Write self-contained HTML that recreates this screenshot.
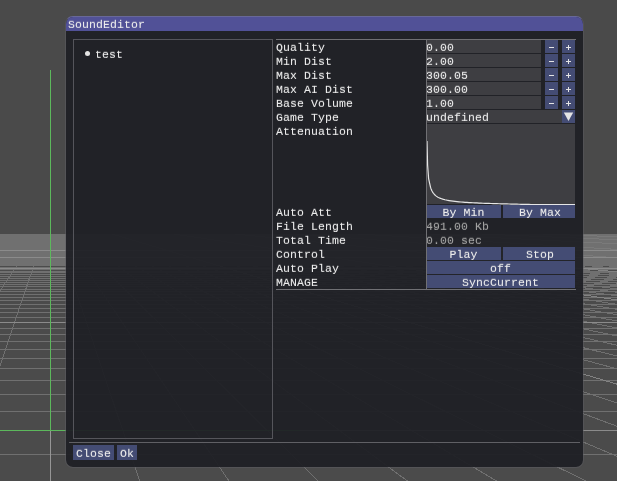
<!DOCTYPE html>
<html><head><meta charset="utf-8"><title>SoundEditor</title>
<style>
html,body{margin:0;padding:0}
body{width:617px;height:481px;overflow:hidden;position:relative;background:#4a4a4a;font-family:"Liberation Mono",monospace;font-size:11.5px;letter-spacing:0.1px;color:#ececec;text-shadow:0 -1px 0 rgba(228,228,228,0.25);line-height:13px}
#win{will-change:transform;position:absolute;box-sizing:border-box;left:65px;top:16px;width:519px;height:452px;border-radius:8px;background:rgba(31,32,37,0.945);background-clip:padding-box;border-style:solid;border-width:1px;border-color:rgb(104,104,152) rgba(94,94,100,0.45) rgba(94,94,100,0.5) rgba(94,94,100,0.5);overflow:hidden}
#title{position:absolute;left:0;top:0;width:517px;height:14px;background:rgba(83,83,155,0.97)}
.t{position:absolute;white-space:pre;height:13px;line-height:13px}
.a{position:absolute}
.fr{position:absolute;background:#3e3e42;height:13px}
.bt{position:absolute;background:#444c74;height:13px;text-align:center}
.onf{-webkit-text-stroke-color:#3e3e42}
.ont{-webkit-text-stroke-color:#525296}
.ln{position:absolute;background:#707074}
.g{color:#a2a2a2;text-shadow:0 -1px 0 rgba(160,160,160,0.3)}
</style></head>
<body>
<svg width="617" height="481" viewBox="0 0 617 481" shape-rendering="crispEdges" style="position:absolute;left:0;top:0">
<rect x="0" y="0" width="617" height="234" fill="#4a4a4a"/>
<rect x="0" y="234" width="617" height="247" fill="#4b4b4b"/>
<rect x="0" y="234" width="617" height="32" fill="#707070"/>
<g><line x1="-51.00" y1="266" x2="-484.82" y2="481" stroke="#707070" stroke-width="1"/><line x1="-34.08" y1="266" x2="-395.60" y2="481" stroke="#707070" stroke-width="1"/><line x1="-17.16" y1="266" x2="-306.38" y2="481" stroke="#707070" stroke-width="1"/><line x1="-0.25" y1="266" x2="-217.16" y2="481" stroke="#707070" stroke-width="1"/><line x1="16.67" y1="266" x2="-127.94" y2="481" stroke="#707070" stroke-width="1"/><line x1="33.58" y1="266" x2="-38.72" y2="481" stroke="#707070" stroke-width="1"/><line x1="67.42" y1="266" x2="139.72" y2="481" stroke="#707070" stroke-width="1"/><line x1="84.33" y1="266" x2="228.94" y2="481" stroke="#707070" stroke-width="1"/><line x1="101.25" y1="266" x2="318.16" y2="481" stroke="#707070" stroke-width="1"/><line x1="118.16" y1="266" x2="407.38" y2="481" stroke="#707070" stroke-width="1"/><line x1="135.08" y1="266" x2="496.60" y2="481" stroke="#707070" stroke-width="1"/><line x1="152.00" y1="266" x2="585.82" y2="481" stroke="#707070" stroke-width="1"/><line x1="168.91" y1="266" x2="675.04" y2="481" stroke="#707070" stroke-width="1"/><line x1="185.83" y1="266" x2="764.26" y2="481" stroke="#707070" stroke-width="1"/><line x1="202.74" y1="266" x2="853.48" y2="481" stroke="#707070" stroke-width="1"/><line x1="236.57" y1="266" x2="1031.92" y2="481" stroke="#707070" stroke-width="1"/><line x1="253.49" y1="266" x2="1121.14" y2="481" stroke="#707070" stroke-width="1"/><line x1="270.41" y1="266" x2="1210.37" y2="481" stroke="#707070" stroke-width="1"/><line x1="287.32" y1="266" x2="1299.59" y2="481" stroke="#707070" stroke-width="1"/><line x1="304.24" y1="266" x2="1388.81" y2="481" stroke="#707070" stroke-width="1"/><line x1="321.15" y1="266" x2="1478.03" y2="481" stroke="#707070" stroke-width="1"/><line x1="338.07" y1="266" x2="1567.25" y2="481" stroke="#707070" stroke-width="1"/><line x1="354.99" y1="266" x2="1656.47" y2="481" stroke="#707070" stroke-width="1"/><line x1="371.90" y1="266" x2="1745.69" y2="481" stroke="#707070" stroke-width="1"/><line x1="405.73" y1="266" x2="1924.13" y2="481" stroke="#707070" stroke-width="1"/><line x1="422.65" y1="266" x2="2013.35" y2="481" stroke="#707070" stroke-width="1"/><line x1="439.57" y1="266" x2="2102.57" y2="481" stroke="#707070" stroke-width="1"/><line x1="456.48" y1="266" x2="2191.79" y2="481" stroke="#707070" stroke-width="1"/><line x1="473.40" y1="266" x2="2281.01" y2="481" stroke="#707070" stroke-width="1"/><line x1="490.31" y1="266" x2="2370.23" y2="481" stroke="#707070" stroke-width="1"/><line x1="507.23" y1="266" x2="2459.45" y2="481" stroke="#707070" stroke-width="1"/><line x1="524.14" y1="266" x2="2548.67" y2="481" stroke="#707070" stroke-width="1"/><line x1="541.06" y1="266" x2="2637.89" y2="481" stroke="#707070" stroke-width="1"/><line x1="574.89" y1="266" x2="2816.33" y2="481" stroke="#707070" stroke-width="1"/><line x1="591.81" y1="266" x2="2905.55" y2="481" stroke="#707070" stroke-width="1"/><line x1="608.72" y1="266" x2="2994.77" y2="481" stroke="#707070" stroke-width="1"/><line x1="625.64" y1="266" x2="3083.99" y2="481" stroke="#707070" stroke-width="1"/><line x1="642.56" y1="266" x2="3173.21" y2="481" stroke="#707070" stroke-width="1"/><line x1="659.47" y1="266" x2="3262.43" y2="481" stroke="#707070" stroke-width="1"/><line x1="676.39" y1="266" x2="3351.65" y2="481" stroke="#707070" stroke-width="1"/><line x1="693.30" y1="266" x2="3440.87" y2="481" stroke="#707070" stroke-width="1"/><line x1="710.22" y1="266" x2="3530.10" y2="481" stroke="#707070" stroke-width="1"/><line x1="744.05" y1="266" x2="3708.54" y2="481" stroke="#707070" stroke-width="1"/><line x1="760.97" y1="266" x2="3797.76" y2="481" stroke="#707070" stroke-width="1"/><line x1="777.88" y1="266" x2="3886.98" y2="481" stroke="#707070" stroke-width="1"/><line x1="794.80" y1="266" x2="3976.20" y2="481" stroke="#707070" stroke-width="1"/><line x1="811.72" y1="266" x2="4065.42" y2="481" stroke="#707070" stroke-width="1"/><line x1="828.63" y1="266" x2="4154.64" y2="481" stroke="#707070" stroke-width="1"/><line x1="845.55" y1="266" x2="4243.86" y2="481" stroke="#707070" stroke-width="1"/><line x1="862.46" y1="266" x2="4333.08" y2="481" stroke="#707070" stroke-width="1"/><line x1="879.38" y1="266" x2="4422.30" y2="481" stroke="#707070" stroke-width="1"/><line x1="913.21" y1="266" x2="4600.74" y2="481" stroke="#707070" stroke-width="1"/><line x1="930.13" y1="266" x2="4689.96" y2="481" stroke="#707070" stroke-width="1"/><line x1="947.04" y1="266" x2="4779.18" y2="481" stroke="#707070" stroke-width="1"/><line x1="963.96" y1="266" x2="4868.40" y2="481" stroke="#707070" stroke-width="1"/><line x1="980.87" y1="266" x2="4957.62" y2="481" stroke="#707070" stroke-width="1"/><line x1="997.79" y1="266" x2="5046.84" y2="481" stroke="#707070" stroke-width="1"/><line x1="1014.71" y1="266" x2="5136.06" y2="481" stroke="#707070" stroke-width="1"/><line x1="1031.62" y1="266" x2="5225.28" y2="481" stroke="#707070" stroke-width="1"/><line x1="1048.54" y1="266" x2="5314.50" y2="481" stroke="#707070" stroke-width="1"/><line x1="1082.37" y1="266" x2="5492.94" y2="481" stroke="#707070" stroke-width="1"/><line x1="1099.29" y1="266" x2="5582.16" y2="481" stroke="#707070" stroke-width="1"/><line x1="1116.20" y1="266" x2="5671.38" y2="481" stroke="#707070" stroke-width="1"/><line x1="1133.12" y1="266" x2="5760.60" y2="481" stroke="#707070" stroke-width="1"/><line x1="1150.03" y1="266" x2="5849.83" y2="481" stroke="#707070" stroke-width="1"/><line x1="1166.95" y1="266" x2="5939.05" y2="481" stroke="#707070" stroke-width="1"/><line x1="1183.86" y1="266" x2="6028.27" y2="481" stroke="#707070" stroke-width="1"/><line x1="1200.78" y1="266" x2="6117.49" y2="481" stroke="#707070" stroke-width="1"/><line x1="1217.70" y1="266" x2="6206.71" y2="481" stroke="#707070" stroke-width="1"/><line x1="1251.53" y1="266" x2="6385.15" y2="481" stroke="#707070" stroke-width="1"/><line x1="1268.44" y1="266" x2="6474.37" y2="481" stroke="#707070" stroke-width="1"/><line x1="1285.36" y1="266" x2="6563.59" y2="481" stroke="#707070" stroke-width="1"/><line x1="1302.28" y1="266" x2="6652.81" y2="481" stroke="#707070" stroke-width="1"/><line x1="1319.19" y1="266" x2="6742.03" y2="481" stroke="#707070" stroke-width="1"/><line x1="1336.11" y1="266" x2="6831.25" y2="481" stroke="#707070" stroke-width="1"/><line x1="1353.02" y1="266" x2="6920.47" y2="481" stroke="#707070" stroke-width="1"/><line x1="1369.94" y1="266" x2="7009.69" y2="481" stroke="#707070" stroke-width="1"/><line x1="1386.86" y1="266" x2="7098.91" y2="481" stroke="#707070" stroke-width="1"/><line x1="1420.69" y1="266" x2="7277.35" y2="481" stroke="#707070" stroke-width="1"/><line x1="1437.60" y1="266" x2="7366.57" y2="481" stroke="#707070" stroke-width="1"/><line x1="1454.52" y1="266" x2="7455.79" y2="481" stroke="#707070" stroke-width="1"/><line x1="1471.43" y1="266" x2="7545.01" y2="481" stroke="#707070" stroke-width="1"/><line x1="1488.35" y1="266" x2="7634.23" y2="481" stroke="#707070" stroke-width="1"/><line x1="1505.27" y1="266" x2="7723.45" y2="481" stroke="#707070" stroke-width="1"/><line x1="1522.18" y1="266" x2="7812.67" y2="481" stroke="#707070" stroke-width="1"/><line x1="1539.10" y1="266" x2="7901.89" y2="481" stroke="#707070" stroke-width="1"/><line x1="1556.01" y1="266" x2="7991.11" y2="481" stroke="#707070" stroke-width="1"/><line x1="1589.85" y1="266" x2="8169.56" y2="481" stroke="#707070" stroke-width="1"/><line x1="1606.76" y1="266" x2="8258.78" y2="481" stroke="#707070" stroke-width="1"/><line x1="1623.68" y1="266" x2="8348.00" y2="481" stroke="#707070" stroke-width="1"/><line x1="1640.59" y1="266" x2="8437.22" y2="481" stroke="#707070" stroke-width="1"/><line x1="1657.51" y1="266" x2="8526.44" y2="481" stroke="#707070" stroke-width="1"/><line x1="1674.43" y1="266" x2="8615.66" y2="481" stroke="#707070" stroke-width="1"/><line x1="1691.34" y1="266" x2="8704.88" y2="481" stroke="#707070" stroke-width="1"/><line x1="1708.26" y1="266" x2="8794.10" y2="481" stroke="#707070" stroke-width="1"/><line x1="1725.17" y1="266" x2="8883.32" y2="481" stroke="#707070" stroke-width="1"/><line x1="1759.00" y1="266" x2="9061.76" y2="481" stroke="#707070" stroke-width="1"/><line x1="1775.92" y1="266" x2="9150.98" y2="481" stroke="#707070" stroke-width="1"/><line x1="1792.84" y1="266" x2="9240.20" y2="481" stroke="#707070" stroke-width="1"/><line x1="1809.75" y1="266" x2="9329.42" y2="481" stroke="#707070" stroke-width="1"/><line x1="1826.67" y1="266" x2="9418.64" y2="481" stroke="#707070" stroke-width="1"/><line x1="1843.58" y1="266" x2="9507.86" y2="481" stroke="#707070" stroke-width="1"/><line x1="1860.50" y1="266" x2="9597.08" y2="481" stroke="#707070" stroke-width="1"/><line x1="1877.42" y1="266" x2="9686.30" y2="481" stroke="#707070" stroke-width="1"/><line x1="1894.33" y1="266" x2="9775.52" y2="481" stroke="#707070" stroke-width="1"/><line x1="1928.16" y1="266" x2="9953.96" y2="481" stroke="#707070" stroke-width="1"/><line x1="1945.08" y1="266" x2="10043.18" y2="481" stroke="#707070" stroke-width="1"/><line x1="1962.00" y1="266" x2="10132.40" y2="481" stroke="#707070" stroke-width="1"/><line x1="1978.91" y1="266" x2="10221.62" y2="481" stroke="#707070" stroke-width="1"/><line x1="1995.83" y1="266" x2="10310.84" y2="481" stroke="#707070" stroke-width="1"/><line x1="2012.74" y1="266" x2="10400.07" y2="481" stroke="#707070" stroke-width="1"/><line x1="2029.66" y1="266" x2="10489.29" y2="481" stroke="#707070" stroke-width="1"/><line x1="2046.58" y1="266" x2="10578.51" y2="481" stroke="#707070" stroke-width="1"/><line x1="2063.49" y1="266" x2="10667.73" y2="481" stroke="#707070" stroke-width="1"/><line x1="2097.32" y1="266" x2="10846.17" y2="481" stroke="#707070" stroke-width="1"/><line x1="2114.24" y1="266" x2="10935.39" y2="481" stroke="#707070" stroke-width="1"/><line x1="2131.15" y1="266" x2="11024.61" y2="481" stroke="#707070" stroke-width="1"/><line x1="2148.07" y1="266" x2="11113.83" y2="481" stroke="#707070" stroke-width="1"/><line x1="2164.99" y1="266" x2="11203.05" y2="481" stroke="#707070" stroke-width="1"/><line x1="2181.90" y1="266" x2="11292.27" y2="481" stroke="#707070" stroke-width="1"/><line x1="2198.82" y1="266" x2="11381.49" y2="481" stroke="#707070" stroke-width="1"/><line x1="2215.73" y1="266" x2="11470.71" y2="481" stroke="#707070" stroke-width="1"/><line x1="2232.65" y1="266" x2="11559.93" y2="481" stroke="#707070" stroke-width="1"/></g>
<g fill="#707070"><rect x="0" y="267" width="617" height="1"/><rect x="0" y="269" width="617" height="1"/><rect x="0" y="271" width="617" height="1"/><rect x="0" y="272" width="617" height="1"/><rect x="0" y="274" width="617" height="1"/><rect x="0" y="276" width="617" height="1"/><rect x="0" y="278" width="617" height="1"/><rect x="0" y="280" width="617" height="1"/><rect x="0" y="282" width="617" height="1"/><rect x="0" y="284" width="617" height="1"/><rect x="0" y="286" width="617" height="1"/><rect x="0" y="289" width="617" height="1"/><rect x="0" y="291" width="617" height="1"/><rect x="0" y="294" width="617" height="1"/><rect x="0" y="297" width="617" height="1"/><rect x="0" y="300" width="617" height="1"/><rect x="0" y="304" width="617" height="1"/><rect x="0" y="308" width="617" height="1"/><rect x="0" y="312" width="617" height="1"/><rect x="0" y="317" width="617" height="1"/><rect x="0" y="328" width="617" height="1"/><rect x="0" y="334" width="617" height="1"/><rect x="0" y="341" width="617" height="1"/><rect x="0" y="349" width="617" height="1"/><rect x="0" y="358" width="617" height="1"/><rect x="0" y="368" width="617" height="1"/><rect x="0" y="380" width="617" height="1"/><rect x="0" y="394" width="617" height="1"/><rect x="0" y="411" width="617" height="1"/><rect x="0" y="454" width="617" height="1"/></g>
<g><line x1="219.66" y1="266" x2="942.70" y2="481" stroke="#838383" stroke-width="1"/><line x1="112.04" y1="234" x2="219.66" y2="266" stroke="#8b8b8b" stroke-opacity="0.35" stroke-width="1"/><line x1="388.82" y1="266" x2="1834.91" y2="481" stroke="#838383" stroke-width="1"/><line x1="173.59" y1="234" x2="388.82" y2="266" stroke="#8b8b8b" stroke-opacity="0.35" stroke-width="1"/><line x1="557.98" y1="266" x2="2727.11" y2="481" stroke="#838383" stroke-width="1"/><line x1="235.13" y1="234" x2="557.98" y2="266" stroke="#8b8b8b" stroke-opacity="0.35" stroke-width="1"/><line x1="727.14" y1="266" x2="3619.32" y2="481" stroke="#838383" stroke-width="1"/><line x1="296.67" y1="234" x2="727.14" y2="266" stroke="#8b8b8b" stroke-opacity="0.35" stroke-width="1"/><line x1="896.29" y1="266" x2="4511.52" y2="481" stroke="#838383" stroke-width="1"/><line x1="358.21" y1="234" x2="896.29" y2="266" stroke="#8b8b8b" stroke-opacity="0.35" stroke-width="1"/><line x1="1065.45" y1="266" x2="5403.72" y2="481" stroke="#838383" stroke-width="1"/><line x1="419.76" y1="234" x2="1065.45" y2="266" stroke="#8b8b8b" stroke-opacity="0.35" stroke-width="1"/><line x1="1234.61" y1="266" x2="6295.93" y2="481" stroke="#838383" stroke-width="1"/><line x1="481.30" y1="234" x2="1234.61" y2="266" stroke="#8b8b8b" stroke-opacity="0.35" stroke-width="1"/><line x1="1403.77" y1="266" x2="7188.13" y2="481" stroke="#838383" stroke-width="1"/><line x1="542.84" y1="234" x2="1403.77" y2="266" stroke="#8b8b8b" stroke-opacity="0.35" stroke-width="1"/><line x1="1572.93" y1="266" x2="8080.34" y2="481" stroke="#838383" stroke-width="1"/><line x1="1742.09" y1="266" x2="8972.54" y2="481" stroke="#838383" stroke-width="1"/><line x1="1911.25" y1="266" x2="9864.74" y2="481" stroke="#838383" stroke-width="1"/><line x1="2080.41" y1="266" x2="10756.95" y2="481" stroke="#838383" stroke-width="1"/></g>
<g fill="#8b8b8b"><rect x="0" y="250" width="617" height="1"/><rect x="0" y="257" width="617" height="1"/><rect x="0" y="268" width="617" height="1"/><rect x="0" y="322" width="617" height="1"/><rect x="0" y="430" width="617" height="1"/></g>
<rect x="50" y="234" width="1" height="247" fill="#969696"/>
<rect x="50" y="70" width="1" height="361" fill="#5cb85c"/>
<rect x="0" y="430" width="300" height="1" fill="#5cb85c"/>
</svg>
<div id="win">
<div id="title"></div>
<div class="t ont" style="left:2.0px;top:1.0px">SoundEditor</div>
<div class="a" style="left:7px;top:22px;width:198px;height:398px;border:1px solid #55555b"></div>
<div class="a" style="left:19px;top:34.25px;width:5px;height:5px;border-radius:50%;background:#e4e4e4"></div>
<div class="t " style="left:29.0px;top:31.0px">test</div>
<div class="ln" style="left:210px;top:22px;width:300px;height:1px;"></div>
<div class="ln" style="left:210px;top:272px;width:300px;height:1px;"></div>
<div class="t " style="left:210.0px;top:24.0px">Quality</div>
<div class="t " style="left:210.0px;top:38.0px">Min Dist</div>
<div class="t " style="left:210.0px;top:52.0px">Max Dist</div>
<div class="t " style="left:210.0px;top:66.0px">Max AI Dist</div>
<div class="t " style="left:210.0px;top:80.0px">Base Volume</div>
<div class="t " style="left:210.0px;top:94.0px">Game Type</div>
<div class="t " style="left:210.0px;top:108.0px">Attenuation</div>
<div class="t " style="left:210.0px;top:189.0px">Auto Att</div>
<div class="t " style="left:210.0px;top:203.0px">File Length</div>
<div class="t " style="left:210.0px;top:217.0px">Total Time</div>
<div class="t " style="left:210.0px;top:231.0px">Control</div>
<div class="t " style="left:210.0px;top:245.0px">Auto Play</div>
<div class="t " style="left:210.0px;top:259.0px">MANAGE</div>
<div class="fr" style="left:360px;top:23px;width:115px;height:13px;"></div>
<div class="t onf" style="left:360.0px;top:24.0px">0.00</div>
<div class="bt" style="left:479px;top:23px;width:13px;height:13px"><svg width="13" height="13" style="position:absolute;left:0;top:0"><rect x="4" y="7" width="5" height="1" fill="#e4e4e4"/></svg></div>
<div class="bt" style="left:496px;top:23px;width:13px;height:13px"><svg width="13" height="13" style="position:absolute;left:0;top:0"><rect x="4" y="7" width="5" height="1" fill="#e4e4e4"/><rect x="6" y="5" width="1" height="5" fill="#e4e4e4"/></svg></div>
<div class="fr" style="left:360px;top:37px;width:115px;height:13px;"></div>
<div class="t onf" style="left:360.0px;top:38.0px">2.00</div>
<div class="bt" style="left:479px;top:37px;width:13px;height:13px"><svg width="13" height="13" style="position:absolute;left:0;top:0"><rect x="4" y="7" width="5" height="1" fill="#e4e4e4"/></svg></div>
<div class="bt" style="left:496px;top:37px;width:13px;height:13px"><svg width="13" height="13" style="position:absolute;left:0;top:0"><rect x="4" y="7" width="5" height="1" fill="#e4e4e4"/><rect x="6" y="5" width="1" height="5" fill="#e4e4e4"/></svg></div>
<div class="fr" style="left:360px;top:51px;width:115px;height:13px;"></div>
<div class="t onf" style="left:360.0px;top:52.0px">300.05</div>
<div class="bt" style="left:479px;top:51px;width:13px;height:13px"><svg width="13" height="13" style="position:absolute;left:0;top:0"><rect x="4" y="7" width="5" height="1" fill="#e4e4e4"/></svg></div>
<div class="bt" style="left:496px;top:51px;width:13px;height:13px"><svg width="13" height="13" style="position:absolute;left:0;top:0"><rect x="4" y="7" width="5" height="1" fill="#e4e4e4"/><rect x="6" y="5" width="1" height="5" fill="#e4e4e4"/></svg></div>
<div class="fr" style="left:360px;top:65px;width:115px;height:13px;"></div>
<div class="t onf" style="left:360.0px;top:66.0px">300.00</div>
<div class="bt" style="left:479px;top:65px;width:13px;height:13px"><svg width="13" height="13" style="position:absolute;left:0;top:0"><rect x="4" y="7" width="5" height="1" fill="#e4e4e4"/></svg></div>
<div class="bt" style="left:496px;top:65px;width:13px;height:13px"><svg width="13" height="13" style="position:absolute;left:0;top:0"><rect x="4" y="7" width="5" height="1" fill="#e4e4e4"/><rect x="6" y="5" width="1" height="5" fill="#e4e4e4"/></svg></div>
<div class="fr" style="left:360px;top:79px;width:115px;height:13px;"></div>
<div class="t onf" style="left:360.0px;top:80.0px">1.00</div>
<div class="bt" style="left:479px;top:79px;width:13px;height:13px"><svg width="13" height="13" style="position:absolute;left:0;top:0"><rect x="4" y="7" width="5" height="1" fill="#e4e4e4"/></svg></div>
<div class="bt" style="left:496px;top:79px;width:13px;height:13px"><svg width="13" height="13" style="position:absolute;left:0;top:0"><rect x="4" y="7" width="5" height="1" fill="#e4e4e4"/><rect x="6" y="5" width="1" height="5" fill="#e4e4e4"/></svg></div>
<div class="fr" style="left:360px;top:93px;width:136px;height:13px;"></div>
<div class="t onf" style="left:360.0px;top:94.0px">undefined</div>
<div class="bt" style="left:496px;top:93px;width:13px;height:13px"><svg width="13" height="13" style="position:absolute;left:0;top:0"><polygon points="1.8,2.4 11.2,2.4 6.5,10.9" fill="#e4e4e4"/></svg></div>
<div class="fr" style="left:360px;top:107px;width:149px;height:80px"><svg width="149" height="82" style="position:absolute;left:0;top:0;overflow:visible"><polyline fill="none" stroke="#e6e6e6" stroke-width="1.2" stroke-linejoin="round" points="1.0,17.00 1.6,41.00 2.6,54.60 4.5,63.23 5.0,64.67 5.5,65.88 6.0,66.93 6.5,67.83 7.0,68.62 7.5,69.32 8.0,69.94 8.5,70.50 9.0,71.00 9.5,71.45 10.0,71.86 10.5,72.24 11.0,72.58 11.5,72.90 12.0,73.19 12.5,73.46 13.0,73.71 13.5,73.95 14.0,74.17 14.5,74.37 15.0,74.56 15.5,74.74 16.0,74.91 16.5,75.07 17.0,75.22 17.5,75.36 18.0,75.50 18.5,75.63 19.0,75.75 21.0,76.18 23.0,76.54 25.0,76.86 27.0,77.14 29.0,77.39 31.0,77.61 33.0,77.80 35.0,77.98 37.0,78.14 39.0,78.29 41.0,78.43 43.0,78.55 45.0,78.67 47.0,78.77 49.0,78.88 51.0,78.97 53.0,79.06 55.0,79.14 57.0,79.23 59.0,79.30 61.0,79.37 63.0,79.44 65.0,79.51 67.0,79.58 69.0,79.64 71.0,79.70 73.0,79.76 75.0,79.81 77.0,79.87 79.0,79.92 81.0,79.97 83.0,80.02 85.0,80.07 87.0,80.11 89.0,80.16 91.0,80.20 93.0,80.25 95.0,80.29 97.0,80.33 99.0,80.38 101.0,80.42 103.0,80.46 105.0,80.49 107.0,80.50 109.0,80.50 111.0,80.50 113.0,80.50 115.0,80.50 117.0,80.50 119.0,80.50 121.0,80.50 123.0,80.50 125.0,80.50 127.0,80.50 129.0,80.50 131.0,80.50 133.0,80.50 135.0,80.50 137.0,80.50 139.0,80.50 141.0,80.50 143.0,80.50 145.0,80.50 147.0,80.50 149.0,80.50"/></svg></div>
<div class="bt" style="left:360px;top:188px;width:75px;height:13px;line-height:13px"><span style="position:relative;top:1.0px;left:0px">By Min</span></div>
<div class="bt" style="left:437px;top:188px;width:72px;height:13px;line-height:13px"><span style="position:relative;top:1.0px;left:1px">By Max</span></div>
<div class="t g" style="left:360.0px;top:203.0px">491.00 Kb</div>
<div class="t g" style="left:360.0px;top:217.0px">0.00 sec</div>
<div class="bt" style="left:360px;top:230px;width:75px;height:13px;line-height:13px"><span style="position:relative;top:1.0px;left:0px">Play</span></div>
<div class="bt" style="left:437px;top:230px;width:72px;height:13px;line-height:13px"><span style="position:relative;top:1.0px;left:1px">Stop</span></div>
<div class="bt" style="left:360px;top:244px;width:149px;height:13px;line-height:13px"><span style="position:relative;top:1.0px;left:0px">off</span></div>
<div class="bt" style="left:360px;top:258px;width:149px;height:13px;line-height:13px"><span style="position:relative;top:1.0px;left:0px">SyncCurrent</span></div>
<div class="ln" style="left:360px;top:22px;width:1px;height:251px;"></div>
<div class="ln" style="left:3px;top:425px;width:511px;height:1px;background:#606065"></div>
<div class="bt" style="left:7px;top:428px;width:41px;height:15px;line-height:15px"><span style="position:relative;top:1.0px;left:0px">Close</span></div>
<div class="bt" style="left:51px;top:428px;width:20px;height:15px;line-height:15px"><span style="position:relative;top:1.0px;left:0px">Ok</span></div>
</div>
</body></html>
